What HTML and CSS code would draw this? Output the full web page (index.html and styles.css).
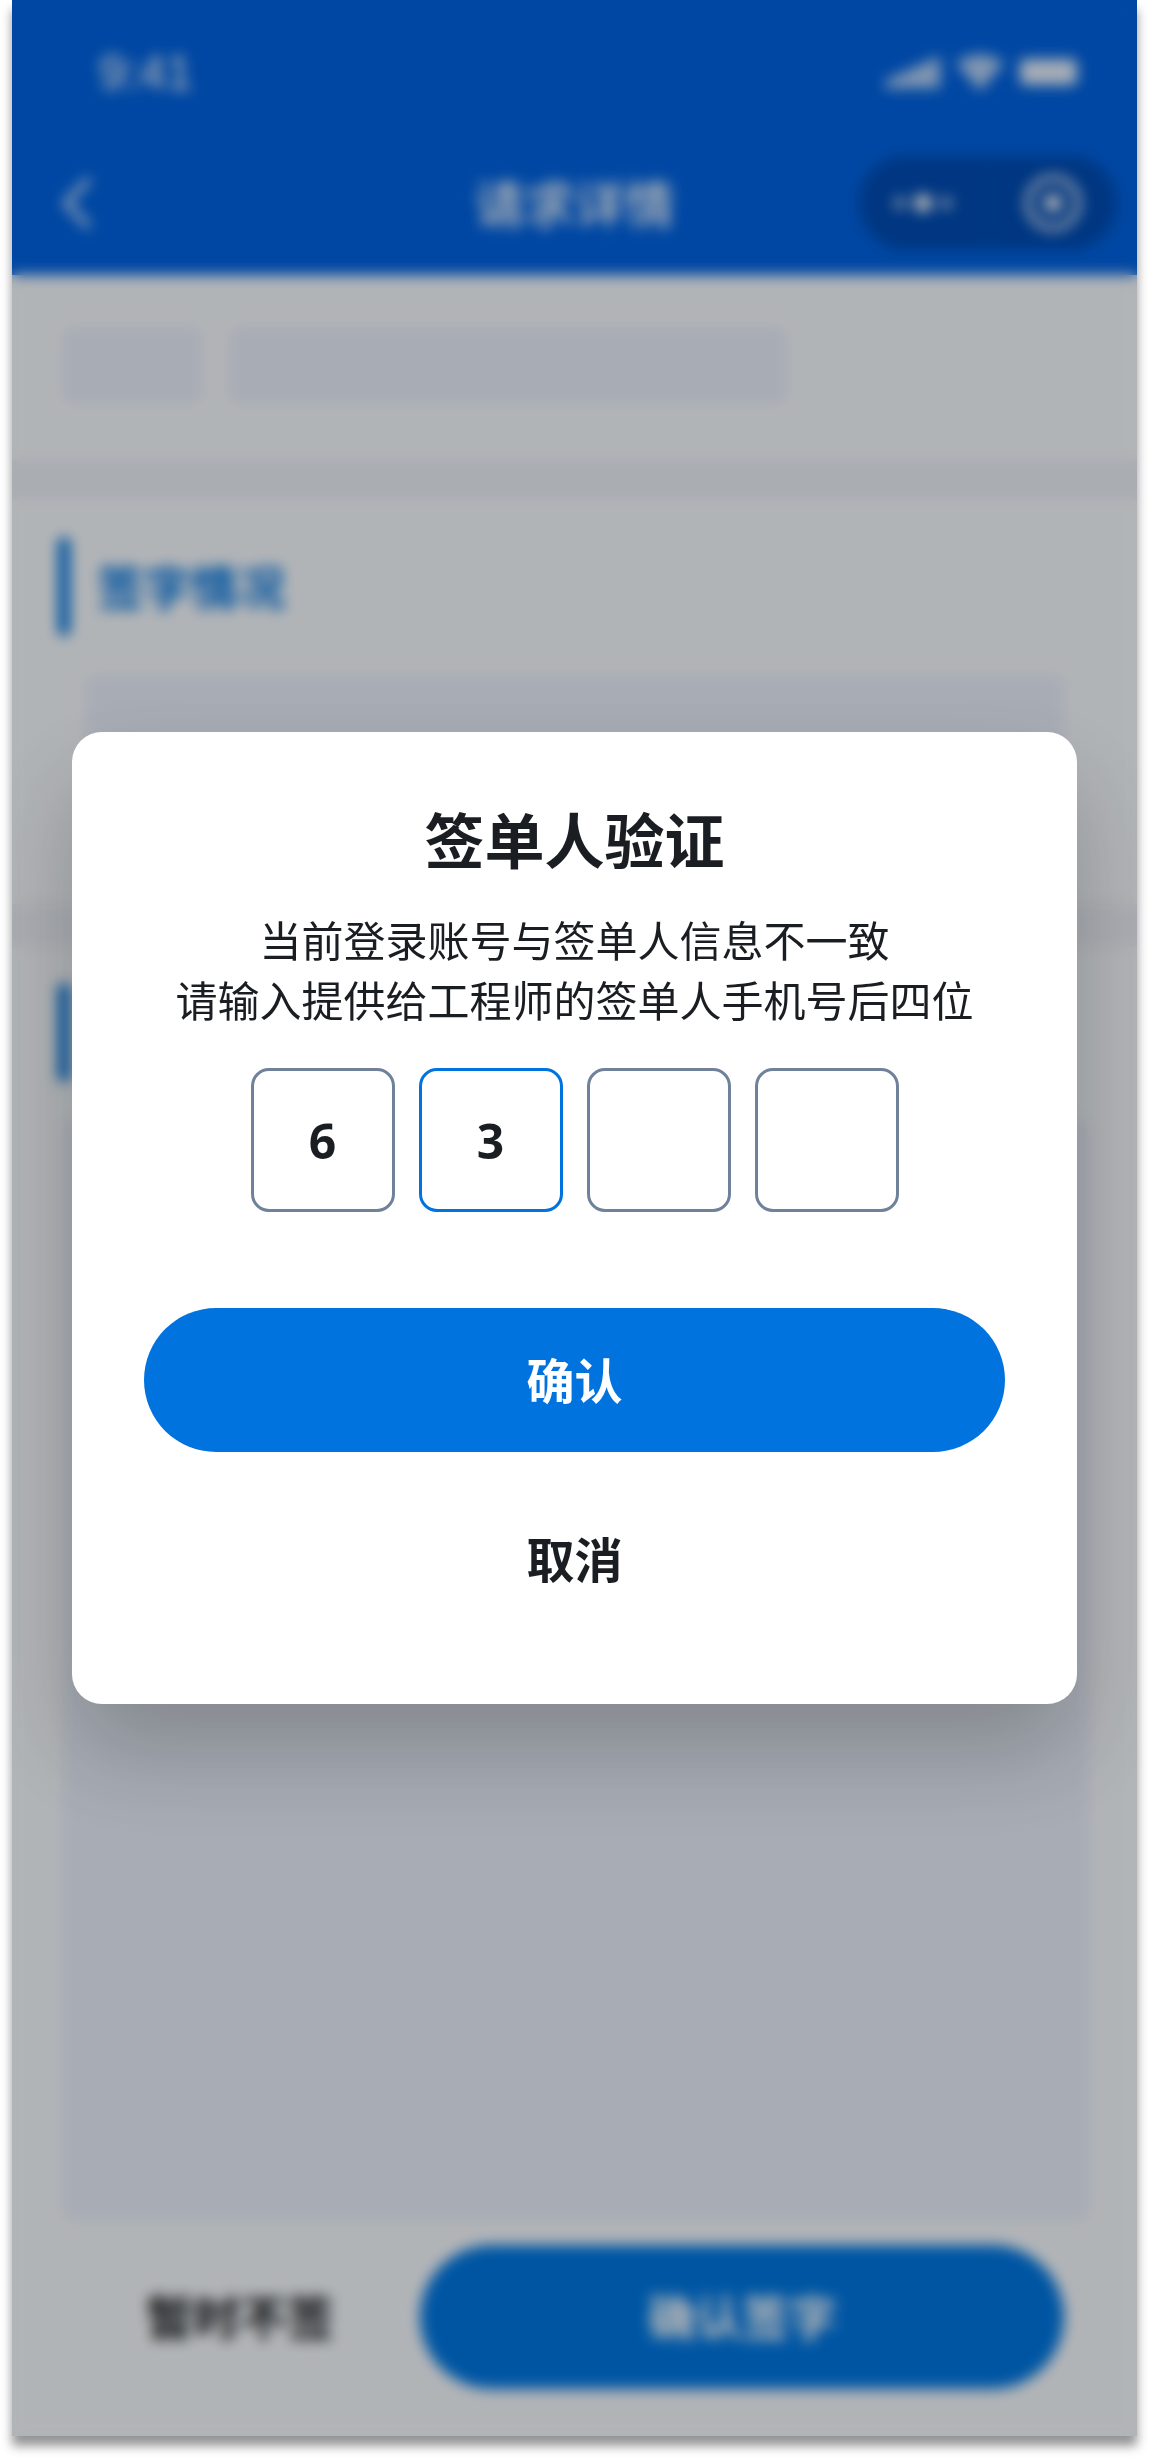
FILE: index.html
```html
<!DOCTYPE html>
<html lang="zh-CN">
<head>
    <meta charset="UTF-8">
    <meta name="viewport" content="width=device-width, initial-scale=1.0">
    <title>签单人验证</title>
    <link rel="stylesheet" href="styles.css">
</head>
<body>

<div class="phone">
    <header class="top">
        <div class="status">
            <span class="time">9:41</span>
            <div class="status-icons">
                <svg width="55" height="32" viewBox="0 0 55 32"><path d="M0 32V25L55 0V32Z" fill="#fff" opacity=".7"/></svg>
                <svg width="48" height="38" viewBox="0 0 48 38"><path d="M0 10Q24-7 48 10L24 38Z" fill="#fff" opacity=".7"/></svg>
                <span class="battery"></span>
            </div>
        </div>
        <div class="nav">
            <svg class="back" width="30" height="54" viewBox="0 0 30 54"><path d="M27 3L4 27L27 51" fill="none" stroke="#fff" stroke-width="5"/></svg>
            <span class="nav-title">请求详情</span>
            <div class="capsule">
                <div class="capsule-side">
                    <svg width="58" height="24" viewBox="0 0 58 24"><circle cx="6" cy="12" r="6" fill="#fff" opacity=".7"/><circle cx="29" cy="12" r="9" fill="#fff"/><circle cx="52" cy="12" r="6" fill="#fff" opacity=".7"/></svg>
                </div>
                <div class="capsule-side">
                    <svg width="58" height="58" viewBox="0 0 58 58"><circle cx="29" cy="29" r="25" fill="none" stroke="#fff" stroke-width="6" opacity=".85"/><circle cx="29" cy="29" r="9" fill="#fff"/></svg>
                </div>
            </div>
        </div>
    </header>

    <div class="chips">
        <div class="chip chip-short"></div>
        <div class="chip chip-long"></div>
    </div>

    <div class="band"></div>

    <section class="sign-section">
        <div class="section-head">
            <i class="accent"></i>
            <span class="section-title">签字情况</span>
        </div>
        <div class="sign-box"></div>
    </section>

    <div class="band band-two"></div>

    <section class="detail-section">
        <div class="section-head section-head-two">
            <i class="accent"></i>
        </div>
        <div class="detail-box"></div>
    </section>

    <footer class="bottom">
        <span class="later">暂时不签</span>
        <button class="sign-btn">确认签字</button>
    </footer>

    <div class="mask">
        <div class="modal">
            <h2>签单人验证</h2>
            <p>当前登录账号与签单人信息不一致<br>请输入提供给工程师的签单人手机号后四位</p>
            <div class="code-row">
                <div class="code-cell">6</div>
                <div class="code-cell active">3</div>
                <div class="code-cell"></div>
                <div class="code-cell"></div>
            </div>
            <button class="ok-btn">确认</button>
            <button class="cancel-btn">取消</button>
        </div>
    </div>
</div>

</body>
</html>
```

FILE: styles.css
```css
* {
    box-sizing: border-box;
}
body {
    margin: 0;
    min-height: 2460px;
    background: #fff;
    font-family: "Noto Sans", "Noto Sans CJK SC", sans-serif;
}
.phone {
    position: relative;
    width: 1125px;
    height: 2436px;
    margin: 0 12px;
    overflow: hidden;
    background: #f6fafe;
    box-shadow: 0 10px 10px rgba(0, 0, 0, 0.42);
}

/* top bar */
.top {
    height: 275px;
    padding-top: 44px;
    background: #0063e2;
    color: #fff;
}
.status {
    display: flex;
    align-items: center;
    justify-content: space-between;
    height: 56px;
    padding: 0 60px 0 87px;
}
.time {
    font-family: "Liberation Sans", sans-serif;
    font-size: 48px;
}
.status-icons {
    display: flex;
    align-items: center;
    gap: 16px;
}
.battery {
    width: 57px;
    height: 26px;
    border-radius: 5px;
    background: #fff;
    opacity: 0.9;
}
.nav {
    display: grid;
    grid-template-columns: 1fr auto 1fr;
    align-items: center;
    height: 94px;
    margin-top: 56px;
    padding: 0 20px;
}
.back {
    margin-left: 30px;
}
.nav-title {
    margin-top: -3px;
    font-size: 50px;
    font-weight: 500;
}
.capsule {
    display: flex;
    justify-self: end;
    width: 258px;
    height: 94px;
    border-radius: 47px;
    background: #004cb4;
}
.capsule-side {
    display: flex;
    flex: 1;
    align-items: center;
    justify-content: center;
}
.capsule-side + .capsule-side {
    border-left: 2px solid #0057c4;
}

/* page behind the dialog */
.chips {
    display: flex;
    gap: 27px;
    padding: 52px 0 0 50px;
}
.chip {
    height: 77px;
    border-radius: 12px;
    background: #e9effb;
}
.chip-short {
    width: 140px;
}
.chip-long {
    width: 558px;
}
.band {
    height: 41px;
    margin-top: 55px;
    background: #ecf0f7;
}
.band-two {
    height: 43px;
    margin-top: 0;
}
.sign-section {
    height: 404px;
    padding: 37px 0 0 46px;
}
.section-head {
    display: flex;
    align-items: center;
    gap: 27px;
    height: 99px;
}
.accent {
    width: 12px;
    height: 99px;
    border-radius: 6px;
    background: #0073de;
}
.section-title {
    margin-top: -4px;
    font-size: 47px;
    font-weight: 700;
    color: #0073de;
}
.sign-box {
    width: 980px;
    height: 300px;
    margin: 39px 0 0 27px;
    border-radius: 12px;
    background: #e9effb;
}
.detail-section {
    padding: 36px 0 0 46px;
}
.section-head-two {
    margin-bottom: 37px;
}
.detail-box {
    width: 1028px;
    height: 1102px;
    margin-left: 4px;
    border-radius: 12px;
    background: #e9effb;
}
.bottom {
    display: flex;
    align-items: center;
    height: 144px;
    margin-top: 24px;
    padding-left: 134px;
}
.later {
    width: 274px;
    margin-top: -5px;
    font-size: 47px;
    font-weight: 700;
    color: #1a1d21;
}
.sign-btn {
    width: 644px;
    height: 144px;
    padding: 0 0 5px;
    border: none;
    border-radius: 72px;
    background: #0077e2;
    color: #fff;
    font: 700 47px "Noto Sans", "Noto Sans CJK SC", sans-serif;
}

/* dialog */
.mask {
    position: absolute;
    inset: 0;
    display: flex;
    justify-content: center;
    padding-top: 732px;
    background: rgba(0, 0, 0, 0.28);
    backdrop-filter: blur(7px);
}
.modal {
    display: flex;
    flex-direction: column;
    align-items: center;
    width: 1005px;
    height: 972px;
    padding-top: 69px;
    border-radius: 30px;
    background: #fff;
    color: #1a1d21;
    box-shadow: 0 48px 96px rgba(0, 0, 0, 0.22);
}
.modal h2 {
    margin: 0;
    font-size: 60px;
    font-weight: 700;
    line-height: 80px;
}
.modal p {
    margin: 30px 0 0;
    font-size: 42px;
    line-height: 60px;
    text-align: center;
}
.code-row {
    display: flex;
    gap: 24px;
    margin-top: 37px;
}
.code-cell {
    display: flex;
    align-items: center;
    justify-content: center;
    width: 144px;
    height: 144px;
    border: 3px solid #6f8299;
    border-radius: 18px;
    font-size: 48px;
    font-weight: 700;
}
.code-cell.active {
    border-color: #0073de;
}
.ok-btn {
    width: 861px;
    height: 144px;
    margin-top: 96px;
    padding: 0 0 5px;
    border: none;
    border-radius: 72px;
    background: #0073de;
    color: #fff;
    font: 700 48px "Noto Sans", "Noto Sans CJK SC", sans-serif;
}
.cancel-btn {
    height: 60px;
    margin-top: 78px;
    padding: 0;
    border: none;
    background: none;
    color: #1a1d21;
    font: 700 48px/60px "Noto Sans", "Noto Sans CJK SC", sans-serif;
}
```
